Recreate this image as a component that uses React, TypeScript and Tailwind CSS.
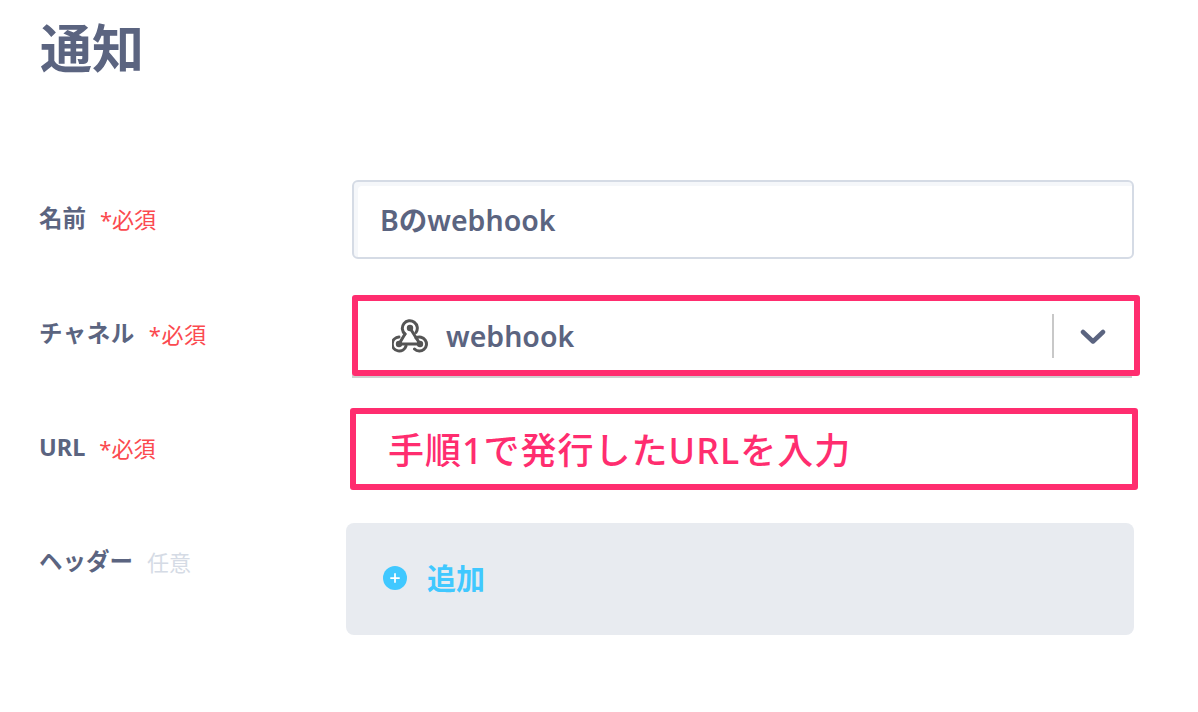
import { Plus } from "lucide-react";

const font = { fontFamily: '"Noto Sans", "Noto Sans CJK JP", sans-serif' };

const Label = ({ text, note, optional, className }: { text: string; note: string; optional?: boolean; className?: string }) => (
  <div className={`flex items-center h-[34px] w-[307px] -ml-px shrink-0 ${className ?? ""}`}>
    <span className="text-[23.5px] leading-none font-bold text-[#5b6480]">{text}</span>
    <span className={`ml-[14px] text-[22px] leading-none ${optional ? "text-[#d5dbe5]" : "text-[#fb4a4f]"}`}>{note}</span>
  </div>
);

const WebhookIcon = () => (
  <svg width="36" height="34" viewBox="0 0 36 34" fill="none" stroke="#555555" strokeWidth="3" strokeLinecap="round">
    <path d="M13 15 A7.5 7.5 0 1 1 24 13.5" />
    <path d="M13 15 L7 25 M18 9 L28 25 M7 25 L28 25" />
    <path d="M7 18 A7 7 0 1 0 14 27" />
    <path d="M22.5 30 A7 7 0 1 0 24 19" />
    <circle cx="18" cy="9" r="3.2" fill="#555555" stroke="none" />
    <circle cx="7" cy="25" r="3.2" fill="#555555" stroke="none" />
    <circle cx="28" cy="25" r="3.2" fill="#555555" stroke="none" />
  </svg>
);

export default function App() {
  return (
    <div className="w-[1198px] h-[712px] bg-white pl-10 overflow-hidden" style={font}>
      <h1 className="pt-[16px] h-[180px] text-[52px] leading-[64px] font-bold text-[#5b6480]">通知</h1>

      <div className="flex items-center h-[79px]">
        <Label text="名前" note="*必須" className="-mt-[2px]" />
        <div className="ml-[6px] w-[782px] h-[79px] rounded-md border-2 border-[#d5dbe5] shadow-[inset_4px_4px_0_#f5f7fa] flex items-center pl-[26px]">
          <span className="mt-[1px] text-[28.5px] font-semibold text-[#5b6480]">Bのwebhook</span>
        </div>
      </div>

      <div className="flex items-center h-[81px] mt-[36px]">
        <Label text="チャネル" note="*必須" className="-mt-[4px] tracking-[0.5px]" />
        <div className="ml-[6px] w-[788px] h-[81px] rounded-[3px] border-[6px] border-[#ff2d6f] shadow-[-4px_6px_0_-4px_#cfcfcf] flex items-center pl-[34px]">
          <WebhookIcon />
          <span className="ml-[18px] mt-[2px] text-[28.5px] font-semibold text-[#5b6480]">webhook</span>
          <div className="ml-auto w-[2px] h-[44px] bg-[#c8c8c8]" />
          <svg className="ml-[26px] mr-[28px] mt-[2px]" width="26" height="16" viewBox="0 0 26 16" fill="none" stroke="#5b6480" strokeWidth="4.5" strokeLinecap="round" strokeLinejoin="round">
            <path d="M3 3 L13 12.5 L23 3" />
          </svg>
        </div>
      </div>

      <div className="flex items-center h-[82px] mt-[32px]">
        <Label text="URL" note="*必須" className="-mt-[2px]" />
        <div className="ml-[4px] w-[788px] h-[82px] rounded-[3px] border-[6px] border-[#ff2d6f] flex items-center pl-[32px]">
          <span className="mt-[3px] text-[36px] leading-none font-medium tracking-[1px] text-[#ff2d6f]">手順1で発行したURLを入力</span>
        </div>
      </div>

      <div className="flex items-start mt-[33px]">
        <Label text="ヘッダー" note="任意" optional className="mt-[22px]" />
        <div className="w-[788px] h-[112px] rounded-lg bg-[#e8ebf0] flex items-center pl-[37px]">
          <div className="w-6 h-6 -mt-[2px] rounded-full bg-[#40c8ff] flex items-center justify-center">
            <Plus className="w-[14px] h-[14px] text-white" strokeWidth={3} />
          </div>
          <span className="ml-5 text-[29px] font-bold text-[#40c8ff]">追加</span>
        </div>
      </div>
    </div>
  );
}
